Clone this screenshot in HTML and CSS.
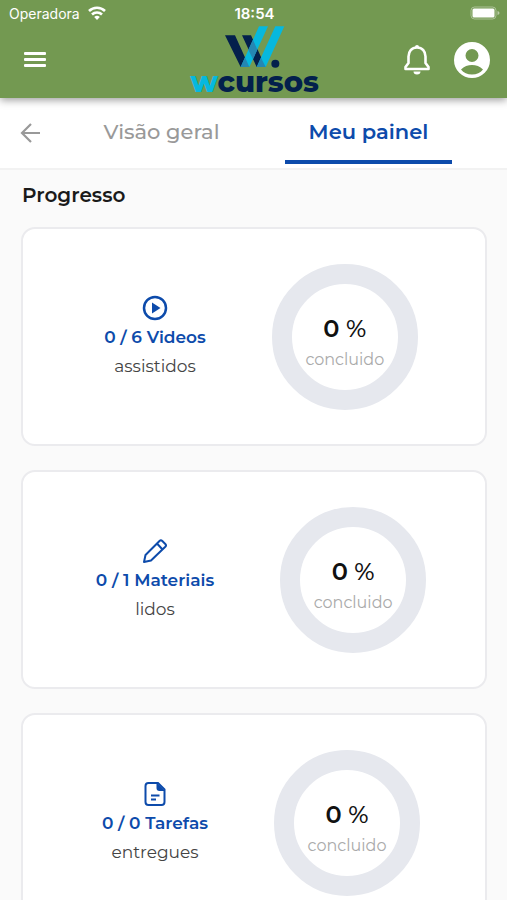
FILE: index.html
```html
<!DOCTYPE html>
<html lang="pt-BR">
<head>
    <meta charset="UTF-8">
    <meta name="viewport" content="width=device-width, initial-scale=1.0">
    <title>wcursos - Meu painel</title>
    <link rel="stylesheet" href="styles.css">
</head>
<body>

    <header class="header">
        <div class="status">
            <div class="status-left">
                <span>Operadora</span>
                <svg width="18" height="14" viewBox="0 0 18 14" fill="none" stroke="#fff" stroke-width="2.6">
                    <path d="M1 5a11.500 11.500 0 0 1 16 0"/>
                    <path d="M4 8.500a7.200 7.200 0 0 1 10 0"/>
                    <path d="M9 14l-2.800-3a4 4 0 0 1 5.600 0z" fill="#fff" stroke="none"/>
                </svg>
            </div>
            <span class="clock">18:54</span>
            <div class="status-right">
                <svg width="30" height="14" viewBox="0 0 30 14">
                    <rect x="1" y="1" width="25" height="12" rx="3.500" fill="none" stroke="#fff" stroke-opacity=".4"/>
                    <rect x="2.500" y="2.500" width="22" height="9" rx="1.500" fill="#fff"/>
                    <path d="M27.500 5v4q2-.6 2-2t-2-2z" fill="#fff" fill-opacity=".5"/>
                </svg>
            </div>
        </div>
        <div class="navbar">
            <button class="icon-btn" aria-label="Menu">
                <svg width="24" height="16" viewBox="0 0 24 16" fill="#fff">
                    <rect x="1" y="0" width="22" height="3" rx="1"/>
                    <rect x="1" y="6" width="22" height="3" rx="1"/>
                    <rect x="1" y="12" width="22" height="3" rx="1"/>
                </svg>
            </button>
            <a href="#" class="logo">
                <svg width="60" height="42" viewBox="140 77 180 126">
                    <path d="M140 105h30l43 95h-26zM191 105h27l44 95h-27z" fill="#03204c"/>
                    <path d="M242 78h27l-56 122h-26zM291 78h27l-56 122h-27z" fill="#06b8de"/>
                    <path d="M200 171l13 29h-26zM224 118l13 30-13 29-14-29zM248 172l14 28h-27z" fill="#2587b3"/>
                    <circle cx="291" cy="190" r="12" fill="#03204c"/>
                </svg>
                <span class="logo-text"><span class="logo-w">w</span>cursos</span>
            </a>
            <div class="nav-actions">
                <button class="icon-btn" aria-label="Notificações">
                    <svg width="28" height="32" viewBox="0 0 28 32">
                        <path d="M14 3.500c-5.400 0-8.500 4-8.500 9v6.500L2.500 23v2h23v-2l-3-4v-6.500c0-5-3.100-9-8.500-9z" fill="none" stroke="#fff" stroke-width="2.600" stroke-linejoin="round"/>
                        <path d="M12 3a2 2 0 0 1 4 0zM10.500 27.500h7a3.500 3 0 0 1-7 0z" fill="#fff"/>
                    </svg>
                </button>
                <button class="icon-btn" aria-label="Perfil">
                    <svg width="36" height="36" viewBox="0 0 36 36">
                        <path fill-rule="evenodd" d="M18 0a18 18 0 1 0 0 36a18 18 0 0 0 0-36zM18 7a6.500 6.500 0 1 1 0 13a6.500 6.500 0 0 1 0-13zM7 27.500c3-3.200 7-4.500 11-4.500s8 1.300 11 4.500c-2.500 3.200-6.500 5-11 5s-8.500-1.800-11-5z" fill="#fff"/>
                    </svg>
                </button>
            </div>
        </div>
    </header>

    <nav class="tabs">
        <button class="icon-btn back" aria-label="Voltar">
            <svg width="20" height="20" viewBox="0 0 20 20" fill="none" stroke="#999" stroke-width="2.200">
                <path d="M20 10H2M11 1L2 10l9 9"/>
            </svg>
        </button>
        <a href="#" class="tab">Visão geral</a>
        <a href="#" class="tab active">Meu painel</a>
    </nav>

    <main class="content">
        <h1>Progresso</h1>

        <section class="card">
            <div class="info">
                <svg width="26" height="26" viewBox="0 0 26 26">
                    <circle cx="13" cy="13" r="11" fill="none" stroke="#0d4bab" stroke-width="2.500"/>
                    <path d="M10 7.500v11l8.500-5.500z" fill="#0d4bab"/>
                </svg>
                <strong>0 / 6 Videos</strong>
                <span>assistidos</span>
            </div>
            <div class="ring">
                <p class="percent"><b>0</b> %</p>
                <p class="label">concluido</p>
            </div>
        </section>

        <section class="card">
            <div class="info">
                <svg width="26" height="26" viewBox="0 0 26 26" fill="none" stroke="#0d4bab" stroke-width="2" stroke-linejoin="round">
                    <path d="M2 24l1.500-7L17.500 3a2 2 0 0 1 2.800 0l3 3a2 2 0 0 1 0 2.800L9 22.500zM15 5.500l5.500 6"/>
                </svg>
                <strong>0 / 1 Materiais</strong>
                <span>lidos</span>
            </div>
            <div class="ring">
                <p class="percent"><b>0</b> %</p>
                <p class="label">concluido</p>
            </div>
        </section>

        <section class="card">
            <div class="info">
                <svg width="26" height="26" viewBox="0 0 26 26" fill="none" stroke="#0d4bab" stroke-width="2">
                    <path d="M16 2H6.500a3 3 0 0 0-3 3v16a3 3 0 0 0 3 3h13a3 3 0 0 0 3-3V8.500z"/>
                    <path d="M14.500 1.500v5.500a3 3 0 0 0 3 3h5.500z" fill="#0d4bab" stroke="none"/>
                    <path d="M9 14.500h8.500M9 18.500h5"/>
                </svg>
                <strong>0 / 0 Tarefas</strong>
                <span>entregues</span>
            </div>
            <div class="ring">
                <p class="percent"><b>0</b> %</p>
                <p class="label">concluido</p>
            </div>
        </section>
    </main>

</body>
</html>
```

FILE: styles.css
```css
* {
    box-sizing: border-box;
}

body {
    margin: 0;
    font-family: 'Montserrat', 'Inter', sans-serif;
    background-color: #fafafa;
    color: #1a1a1a;
    overflow-x: hidden;
}

svg {
    display: block;
}

p {
    margin: 0;
}

.icon-btn {
    padding: 0;
    border: none;
    background: none;
    cursor: pointer;
}

.header {
    position: relative;
    background-color: #739951;
    box-shadow: 0 2px 8px rgba(0, 0, 0, 0.4);
}

.status {
    display: grid;
    grid-template-columns: 1fr auto 1fr;
    align-items: center;
    height: 26px;
    padding: 0 7px 0 9px;
    font-family: 'Inter', sans-serif;
    font-size: 14px;
    color: #fff;
}

.status-left {
    display: flex;
    align-items: center;
    gap: 8px;
}

.status-right {
    display: flex;
    justify-content: flex-end;
}

.clock {
    font-size: 15px;
    font-weight: 600;
}

.navbar {
    display: grid;
    grid-template-columns: 1fr auto 1fr;
    grid-template-rows: 68px;
    align-items: center;
    padding: 0 17px 4px 23px;
}

.logo {
    display: flex;
    flex-direction: column;
    align-items: center;
    margin: 2px 4px 0 0;
    text-decoration: none;
}

.logo-text {
    font-size: 29px;
    font-weight: 800;
    line-height: 28px;
    color: #03204c;
}

.logo-w {
    color: #06b8de;
}

.nav-actions {
    display: flex;
    justify-content: flex-end;
    align-items: center;
    gap: 23px;
}

.tabs {
    display: flex;
    align-items: stretch;
    height: 72px;
    padding: 0 55px 4px 20px;
    background-color: #fff;
    border-bottom: 2px solid #f2f2f2;
}

.back {
    margin-right: 38px;
    padding-top: 4px;
}

.tab {
    flex: 1;
    padding-top: 20px;
    border-bottom: 4px solid transparent;
    font-size: 21px;
    font-weight: 500;
    line-height: 28px;
    text-align: center;
    text-decoration: none;
    color: #999;
}

.tab + .tab {
    margin-left: 40px;
}

.tab.active {
    border-bottom-color: #0d4bab;
    font-weight: 600;
    color: #0d4bab;
}

.content {
    padding: 12px 20px 24px 21px;
}

h1 {
    margin: 0 1px 19px;
    font-size: 20px;
    font-weight: 600;
    line-height: 26px;
}

.card {
    display: flex;
    justify-content: center;
    align-items: center;
    gap: 66px;
    height: 219px;
    margin-bottom: 24px;
    padding-left: 14px;
    border: 2px solid #ebebee;
    border-radius: 14px;
    background-color: #fff;
}

.info {
    display: flex;
    flex-direction: column;
    align-items: center;
    padding-top: 2px;
    font-size: 17px;
    line-height: 29px;
}

.info svg {
    margin-bottom: 2px;
}

.info strong {
    font-weight: 600;
    color: #0d4bab;
}

.info span {
    color: #444;
}

.ring {
    display: flex;
    flex-direction: column;
    align-items: center;
    justify-content: center;
    width: 146px;
    height: 146px;
    padding-top: 14px;
    border: 20px solid #e6e8ee;
    border-radius: 50%;
}

.percent {
    font-size: 24px;
    font-weight: 500;
    line-height: 32px;
    color: #111;
}

.percent b {
    font-weight: 600;
}

.label {
    font-size: 16px;
    line-height: 30px;
    color: #aaa;
}
```
